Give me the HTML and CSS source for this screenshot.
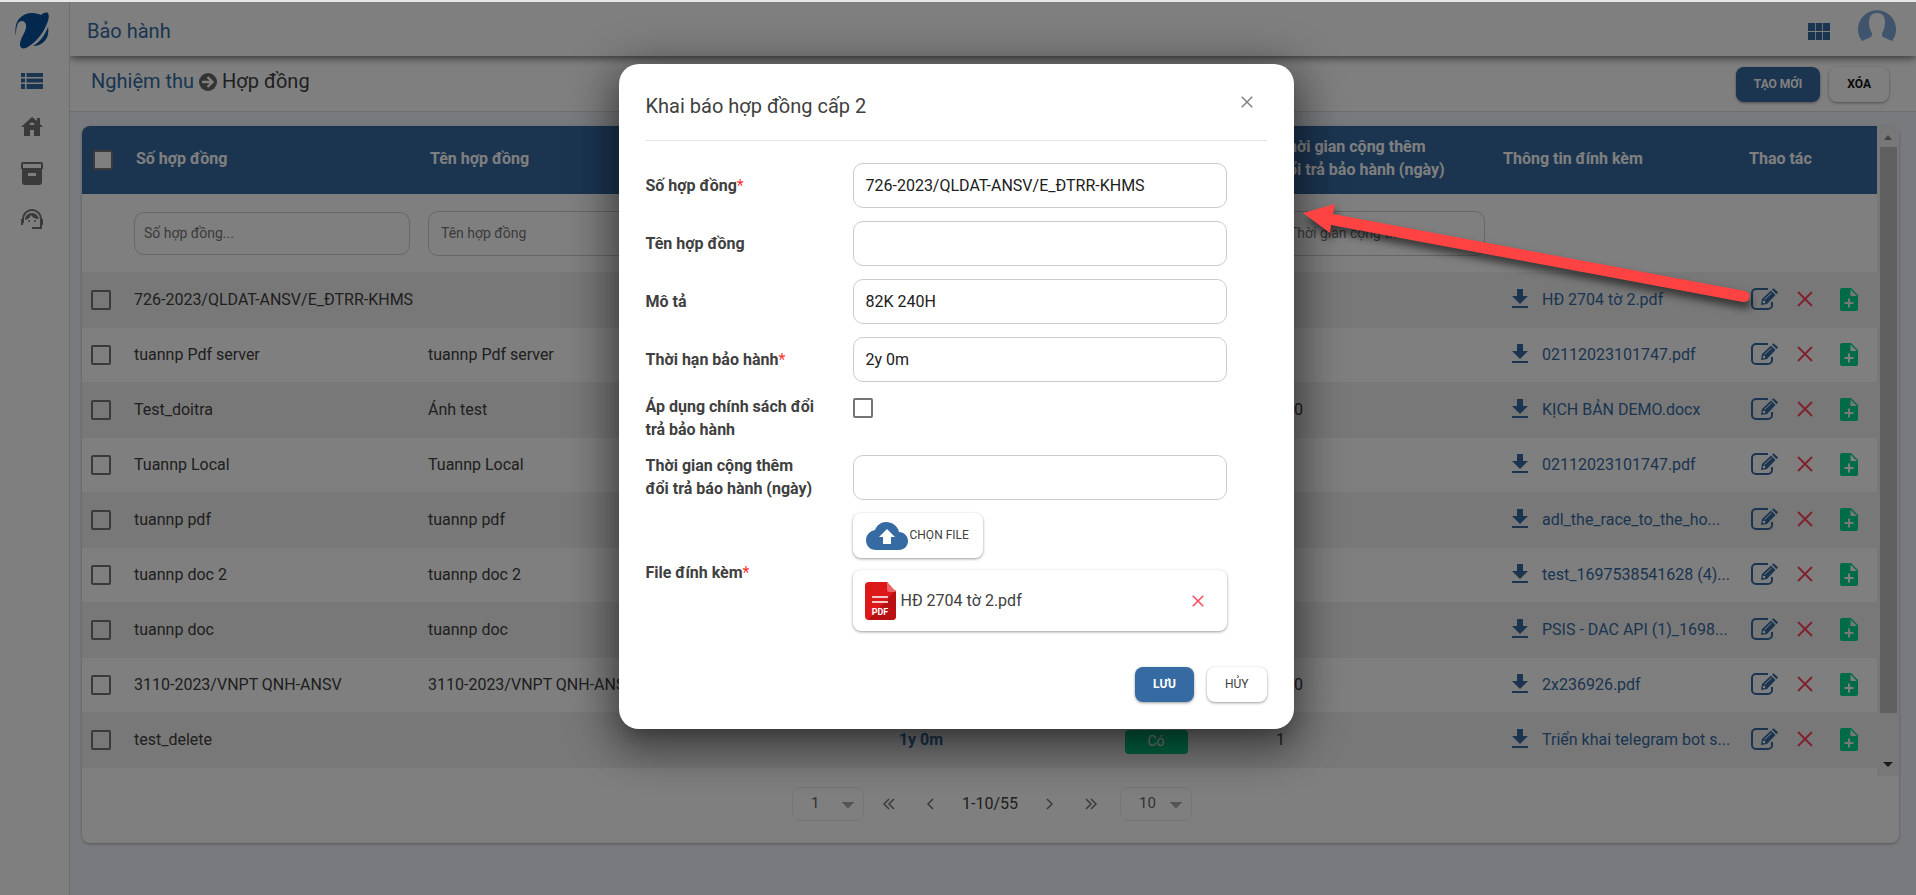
FILE: index.html
```html
<!DOCTYPE html>
<html lang="vi">
<head>
<meta charset="utf-8">
<meta name="viewport" content="width=device-width, initial-scale=1">
<title>Bảo hành</title>
<link rel="stylesheet" href="styles.css">
</head>
<body>
<svg class="sprite" aria-hidden="true">
  <symbol id="i-download" viewBox="0 0 16 20"><path d="M5 0h6v7h5l-8 8-8-8h5zM0 17h16v2H0z" fill="currentColor"/></symbol>
  <symbol id="i-edit" viewBox="0 0 28 22">
    <path d="M17 1H5a4 4 0 0 0-4 4v12a4 4 0 0 0 4 4h12a4 4 0 0 0 4-4v-3" fill="none" stroke="currentColor" stroke-width="2"/>
    <path d="M10 17l1-6L20 2.500l4.500 4.500L16 16z" fill="currentColor"/>
    <path d="M21 1.500l1.500-1.200 4.500 4-1.500 2z" fill="currentColor"/>
    <path d="M13.500 11.500l7-6.500" stroke="#fff" stroke-width="1"/><circle cx="13" cy="14" r="1.300" fill="#fff"/>
  </symbol>
  <symbol id="i-x" viewBox="0 0 16 16"><path d="M1 1l14 14M15 1L1 15" fill="none" stroke="currentColor" stroke-width="2"/></symbol>
  <symbol id="i-add" viewBox="0 0 18 23"><path fill-rule="evenodd" d="M2 0h9l7 7v14a2 2 0 0 1-2 2H2a2 2 0 0 1-2-2V2a2 2 0 0 1 2-2zM10.500 1.500V8H17zM8 10.500V14H4.500v2H8v3.500h2V16h3.500v-2H10v-3.500z" fill="currentColor"/></symbol>
</svg>
<div class="app">
  <aside class="sidebar">
    <a class="logo" href="#" aria-label="Trang chủ">
      <svg width="34" height="37" viewBox="0 0 34 37"><g fill="#06509a"><path d="M1 24C-2 10 6 1 17 1c4 0 7 1 9 2 2-2 5-3 7-2 2 3 0 9-3 15-4 8-11 16-19 20-3 1-6 0-6-3 0-8 7-13 6-20-1-6-8-5-9 1-1 3-1 6-1 10z"/><path d="M33 15c2 11-5 19-15 19 7-4 12-11 15-19z"/></g></svg>
    </a>
    <nav class="menu">
      <a class="active" href="#" aria-label="Danh sách"><svg width="22" height="18" viewBox="0 0 22 18"><path d="M0 1h4v4H0zM5.500 1H22v4H5.500zM0 6.500h4v4H0zM5.500 6.500H22v4H5.500zM0 12h4v5H0zM5.500 12H22v5H5.500z" fill="currentColor"/></svg></a>
      <a href="#" aria-label="Nhà"><svg width="22" height="20" viewBox="0 0 22 20"><path fill-rule="evenodd" d="M0 10L11 0l5 4V1h3v6l3 3h-3v9h-6v-6H9v6H3v-9zM8.500 8h5A2.500 2.500 0 0 0 8.500 8z" fill="currentColor"/></svg></a>
      <a href="#" aria-label="Lưu trữ"><svg width="22" height="23" viewBox="0 0 22 23"><path fill-rule="evenodd" d="M2 0h18a2 2 0 0 1 2 2v5h-1v13a3 3 0 0 1-3 3H4a3 3 0 0 1-3-3V7H0V2a2 2 0 0 1 2-2zM2 2v4h18V2zM7 11v3h8v-3z" fill="currentColor"/></svg></a>
      <a href="#" aria-label="Hỗ trợ"><svg width="22" height="21" viewBox="0 0 22 21"><path d="M2 14V10a9 9 0 0 1 18 0v9h-9" fill="none" stroke="currentColor" stroke-width="2"/><path d="M0 10h2v6H0zM20 10h2v6h-2z" fill="currentColor"/><path d="M4 11c0-4 3-7 7-7 3 0 6 2 7 6-3 0-6-1-8-4-1 3-3 4-6 5z" fill="currentColor"/><circle cx="8" cy="12" r="1" fill="currentColor"/><circle cx="14" cy="12" r="1" fill="currentColor"/></svg></a>
    </nav>
  </aside>
  <div class="main">
    <header class="topbar">
      <h1>Bảo hành</h1>
      <div class="topbar-tools">
        <button class="plain primary" aria-label="Ứng dụng"><svg width="22" height="17" viewBox="0 0 22 17"><path d="M0 0h7v8H0zM7.800 0h6.400v8H7.800zM15 0h7v8h-7zM0 9h7v8H0zM7.800 9h6.400v8H7.800zM15 9h7v8h-7z" fill="currentColor"/></svg></button>
        <button class="plain avatar" aria-label="Tài khoản"><svg width="38" height="31" viewBox="0 0 38 31"><path d="M4 31A19 19 0 1 1 34 31L25 27q-1-1-1-4 3-4 3-11 0-9-8-9t-8 9q0 7 3 11 0 3-1 4z" fill="#82a8da"/></svg></button>
      </div>
    </header>
    <div class="crumbs">
      <nav class="trail"><a href="#">Nghiệm thu</a>
        <svg width="18" height="18" viewBox="0 0 18 18"><circle cx="9" cy="9" r="9" fill="#666"/><path d="M3 9h10M8.500 4l5 5-5 5" fill="none" stroke="#fff" stroke-width="2.400"/></svg>
        <span>Hợp đồng</span></nav>
      <div class="crumb-actions"><button class="btn btn-primary">TẠO MỚI</button><button class="btn btn-strong">XÓA</button></div>
    </div>
    <main class="content">
      <section class="card">
        <div class="table-area">
          <table>
            <colgroup><col class="c-check"><col class="c-number"><col class="c-name"><col class="c-note"><col class="c-term"><col class="c-policy"><col class="c-extra"><col class="c-file"><col class="c-act"></colgroup>
            <thead>
              <tr><th><input type="checkbox" aria-label="Chọn tất cả"></th><th>Số hợp đồng</th><th>Tên hợp đồng</th><th></th><th></th><th></th><th>Thời gian cộng thêm<br>đổi trả bảo hành (ngày)</th><th>Thông tin đính kèm</th><th>Thao tác</th></tr>
            </thead>
            <tbody>
              <tr class="filter"><td></td><td><input class="field small" type="text" placeholder="Số hợp đồng..." aria-label="Số hợp đồng"></td><td><input class="field" type="text" placeholder="Tên hợp đồng" aria-label="Tên hợp đồng"></td><td></td><td></td><td></td><td><input class="field" type="text" placeholder="Thời gian cộng thêm" aria-label="Thời gian cộng thêm"></td><td></td><td></td></tr>
              <tr><td><input type="checkbox" aria-label="Chọn"></td><td>726-2023/QLDAT-ANSV/E_ĐTRR-KHMS</td><td></td><td></td><td></td><td></td><td></td><td><a class="file" href="#"><svg width="16" height="20"><use href="#i-download"/></svg><span>HĐ 2704 tờ 2.pdf</span></a></td><td><div class="acts"><button class="plain primary" aria-label="Sửa"><svg width="28" height="22"><use href="#i-edit"/></svg></button><button class="plain danger" aria-label="Xóa"><svg width="16" height="16"><use href="#i-x"/></svg></button><button class="plain success" aria-label="Thêm"><svg width="18" height="23"><use href="#i-add"/></svg></button></div></td></tr>
              <tr><td><input type="checkbox" aria-label="Chọn"></td><td>tuannp Pdf server</td><td>tuannp Pdf server</td><td></td><td></td><td></td><td></td><td><a class="file" href="#"><svg width="16" height="20"><use href="#i-download"/></svg><span>02112023101747.pdf</span></a></td><td><div class="acts"><button class="plain primary" aria-label="Sửa"><svg width="28" height="22"><use href="#i-edit"/></svg></button><button class="plain danger" aria-label="Xóa"><svg width="16" height="16"><use href="#i-x"/></svg></button><button class="plain success" aria-label="Thêm"><svg width="18" height="23"><use href="#i-add"/></svg></button></div></td></tr>
              <tr><td><input type="checkbox" aria-label="Chọn"></td><td>Test_doitra</td><td>Ánh test</td><td></td><td></td><td></td><td>100</td><td><a class="file" href="#"><svg width="16" height="20"><use href="#i-download"/></svg><span>KỊCH BẢN DEMO.docx</span></a></td><td><div class="acts"><button class="plain primary" aria-label="Sửa"><svg width="28" height="22"><use href="#i-edit"/></svg></button><button class="plain danger" aria-label="Xóa"><svg width="16" height="16"><use href="#i-x"/></svg></button><button class="plain success" aria-label="Thêm"><svg width="18" height="23"><use href="#i-add"/></svg></button></div></td></tr>
              <tr><td><input type="checkbox" aria-label="Chọn"></td><td>Tuannp Local</td><td>Tuannp Local</td><td></td><td></td><td></td><td></td><td><a class="file" href="#"><svg width="16" height="20"><use href="#i-download"/></svg><span>02112023101747.pdf</span></a></td><td><div class="acts"><button class="plain primary" aria-label="Sửa"><svg width="28" height="22"><use href="#i-edit"/></svg></button><button class="plain danger" aria-label="Xóa"><svg width="16" height="16"><use href="#i-x"/></svg></button><button class="plain success" aria-label="Thêm"><svg width="18" height="23"><use href="#i-add"/></svg></button></div></td></tr>
              <tr><td><input type="checkbox" aria-label="Chọn"></td><td>tuannp pdf</td><td>tuannp pdf</td><td></td><td></td><td></td><td></td><td><a class="file" href="#"><svg width="16" height="20"><use href="#i-download"/></svg><span>adl_the_race_to_the_ho...</span></a></td><td><div class="acts"><button class="plain primary" aria-label="Sửa"><svg width="28" height="22"><use href="#i-edit"/></svg></button><button class="plain danger" aria-label="Xóa"><svg width="16" height="16"><use href="#i-x"/></svg></button><button class="plain success" aria-label="Thêm"><svg width="18" height="23"><use href="#i-add"/></svg></button></div></td></tr>
              <tr><td><input type="checkbox" aria-label="Chọn"></td><td>tuannp doc 2</td><td>tuannp doc 2</td><td></td><td></td><td></td><td></td><td><a class="file" href="#"><svg width="16" height="20"><use href="#i-download"/></svg><span>test_1697538541628 (4)...</span></a></td><td><div class="acts"><button class="plain primary" aria-label="Sửa"><svg width="28" height="22"><use href="#i-edit"/></svg></button><button class="plain danger" aria-label="Xóa"><svg width="16" height="16"><use href="#i-x"/></svg></button><button class="plain success" aria-label="Thêm"><svg width="18" height="23"><use href="#i-add"/></svg></button></div></td></tr>
              <tr><td><input type="checkbox" aria-label="Chọn"></td><td>tuannp doc</td><td>tuannp doc</td><td></td><td></td><td></td><td></td><td><a class="file" href="#"><svg width="16" height="20"><use href="#i-download"/></svg><span>PSIS - DAC API (1)_1698...</span></a></td><td><div class="acts"><button class="plain primary" aria-label="Sửa"><svg width="28" height="22"><use href="#i-edit"/></svg></button><button class="plain danger" aria-label="Xóa"><svg width="16" height="16"><use href="#i-x"/></svg></button><button class="plain success" aria-label="Thêm"><svg width="18" height="23"><use href="#i-add"/></svg></button></div></td></tr>
              <tr><td><input type="checkbox" aria-label="Chọn"></td><td>3110-2023/VNPT QNH-ANSV</td><td>3110-2023/VNPT QNH-ANSV</td><td></td><td></td><td></td><td>100</td><td><a class="file" href="#"><svg width="16" height="20"><use href="#i-download"/></svg><span>2x236926.pdf</span></a></td><td><div class="acts"><button class="plain primary" aria-label="Sửa"><svg width="28" height="22"><use href="#i-edit"/></svg></button><button class="plain danger" aria-label="Xóa"><svg width="16" height="16"><use href="#i-x"/></svg></button><button class="plain success" aria-label="Thêm"><svg width="18" height="23"><use href="#i-add"/></svg></button></div></td></tr>
              <tr><td><input type="checkbox" aria-label="Chọn"></td><td>test_delete</td><td></td><td></td><td class="term">1y 0m</td><td class="center"><span class="badge">Có</span></td><td>1</td><td><a class="file" href="#"><svg width="16" height="20"><use href="#i-download"/></svg><span>Triển khai telegram bot s...</span></a></td><td><div class="acts"><button class="plain primary" aria-label="Sửa"><svg width="28" height="22"><use href="#i-edit"/></svg></button><button class="plain danger" aria-label="Xóa"><svg width="16" height="16"><use href="#i-x"/></svg></button><button class="plain success" aria-label="Thêm"><svg width="18" height="23"><use href="#i-add"/></svg></button></div></td></tr>
            </tbody>
          </table>
          <div class="scroll" aria-hidden="true"><i class="up"></i><i class="thumb"></i><i class="down"></i></div>
        </div>
        <footer class="pager">
          <select aria-label="Trang"><option>1</option></select>
          <button class="plain first" aria-label="Trang đầu"><svg width="12" height="12" viewBox="0 0 12 12"><path d="M6 1L1 6l5 5M11 1L6 6l5 5"/></svg></button>
          <button class="plain" aria-label="Trang trước"><svg width="12" height="12" viewBox="0 0 12 12"><path d="M8 1L3 6l5 5"/></svg></button>
          <span>1-10/55</span>
          <button class="plain" aria-label="Trang sau"><svg width="12" height="12" viewBox="0 0 12 12"><path d="M4 1l5 5-5 5"/></svg></button>
          <button class="plain last" aria-label="Trang cuối"><svg width="12" height="12" viewBox="0 0 12 12"><path d="M1 1l5 5-5 5M6 1l5 5-5 5"/></svg></button>
          <select aria-label="Số dòng"><option>10</option></select>
        </footer>
      </section>
    </main>
  </div>

  <div class="overlay">
    <form class="modal" role="dialog" aria-labelledby="dlg-title">
      <div class="modal-head"><h2 id="dlg-title">Khai báo hợp đồng cấp 2</h2><button type="button" class="plain close" aria-label="Đóng"><svg width="12" height="12" viewBox="0 0 16 16"><use href="#i-x"/></svg></button></div>
      <div class="grid">
        <label for="f1">Số hợp đồng<em>*</em></label><input id="f1" class="field" type="text" value="726-2023/QLDAT-ANSV/E_ĐTRR-KHMS">
        <label for="f2">Tên hợp đồng</label><input id="f2" class="field" type="text">
        <label for="f3">Mô tả</label><input id="f3" class="field" type="text" value="82K 240H">
        <label for="f4">Thời hạn bảo hành<em>*</em></label><input id="f4" class="field" type="text" value="2y 0m">
        <label for="f5">Áp dụng chính sách đổi trả bảo hành</label><input id="f5" class="top" type="checkbox">
        <label for="f6">Thời gian cộng thêm đổi trả báo hành (ngày)</label><input id="f6" class="field" type="text">
        <label for="f7">File đính kèm<em>*</em></label>
        <div class="files">
          <button id="f7" type="button" class="btn upload"><svg width="42" height="28" viewBox="0 0 42 28"><path d="M10 28C4 28 0 24 0 18c0-5 4-9 9-10C11 3 15 0 20 0c6 0 12 4 13 10 5 0 9 4 9 9s-4 9-9 9z" fill="#366aa2"/><path d="M21 7l8 8h-4v7h-8v-7h-4z" fill="#fff"/></svg>CHỌN FILE</button>
          <div class="file-card">
            <svg width="31" height="38" viewBox="0 0 31 38"><path d="M4 0h18l9 10v24a4 4 0 0 1-4 4H4a4 4 0 0 1-4-4V4a4 4 0 0 1 4-4z" fill="#dc1819"/><path d="M31 8v26a4 4 0 0 1-4 4H3z" fill="#b91013"/><path d="M22 0l9 10h-7a2 2 0 0 1-2-2z" fill="#eb6666"/><path d="M7 15h16M7 20h16" stroke="#fff" stroke-width="1.500"/><text class="pdf" x="15" y="33">PDF</text></svg>
            <span>HĐ 2704 tờ 2.pdf</span>
            <button type="button" class="plain danger" aria-label="Gỡ file"><svg width="12" height="12"><use href="#i-x"/></svg></button>
          </div>
        </div>
      </div>
      <div class="modal-foot"><button class="btn btn-primary">LƯU</button><button type="button" class="btn">HỦY</button></div>
    </form>
  </div>
  <svg class="pointer" viewBox="0 0 480 120" width="480" height="120" aria-hidden="true"><path d="M13 23L45 14l-2 10 412 77a5.500 5.500 0 0 1-2 11L41 35l-1 8z" fill="#ff4343"/></svg>
</div>
</body>
</html>
```
FILE: styles.css
```css
* { box-sizing: border-box; }
body { margin: 0; font: 16px/23px Roboto, sans-serif; color: #404040; }
button, input, select { font: inherit; color: inherit; }
h1, h2 { margin: 0; font-weight: 400; font-size: 20px; }
a { color: inherit; text-decoration: none; }
svg { display: block; flex: none; }
.sprite { position: absolute; width: 0; height: 0; }

.app { position: relative; display: flex; min-height: 100vh; border-top: 2px solid #e8e8e8; background: #fff; overflow: hidden; }
.sidebar { width: 70px; flex: none; border-right: 1px solid #dcdde0; padding: 10px 0; color: #747474; }
.logo { display: flex; justify-content: center; margin-left: -6px; }
.menu { display: flex; flex-direction: column; align-items: center; margin: 9px 6px 0 0; }
.menu a { display: flex; align-items: center; height: 46px; }
.active, .primary { color: #366aa2; }

.main { flex: 1; min-width: 0; display: flex; flex-direction: column; }
.topbar { position: relative; display: flex; justify-content: space-between; align-items: center; height: 54px; padding: 0 20px 0 17px; box-shadow: 0 2px 8px rgba(0,0,0,.6); clip-path: inset(0 0 -12px 0); color: #366aa2; }
.topbar h1 { padding-top: 4px; }
.topbar-tools { display: flex; align-items: center; gap: 28px; }
.plain { display: inline-flex; border: 0; background: none; padding: 0; cursor: pointer; }
.topbar .primary { padding-top: 4px; }
.topbar .avatar { padding-bottom: 8px; }
.crumbs { display: flex; justify-content: space-between; align-items: center; height: 56px; padding: 2px 27px 0 21px; border-bottom: 1px solid #dcdde0; }
.trail { display: flex; align-items: center; gap: 5px; font-size: 20px; padding-bottom: 6px; }
.trail a { color: #366aa2; }
.crumb-actions { display: flex; gap: 9px; }
.btn { height: 35px; padding: 0 18px; border: 0; border-radius: 8px; background: #fff; font-size: 12px; box-shadow: 0 1px 3px rgba(0,0,0,.4); cursor: pointer; }
.btn-strong { color: #111; font-weight: 700; }
.btn-primary { background: #366aa2; color: #fff; font-weight: 700; }

.content { flex: 1; background: #f3f5fb; padding: 14px 17px 52px 12px; }
.card { background: #fff; border-radius: 8px; overflow: hidden; box-shadow: 0 1px 3px rgba(0,0,0,.3); }
.table-area { display: flex; height: 650px; }
table { flex: 1; width: 100%; min-width: 0; border-collapse: collapse; table-layout: fixed; align-self: flex-start; }
.c-check { width: 44px; } .c-number, .c-name { width: 294px; } .c-note { width: 84px; } .c-term { width: 246px; }
.c-policy { width: 224px; } .c-extra { width: 225px; } .c-file { width: 246px; } .c-act { width: 138px; }
th { height: 68px; padding: 0 0 4px 10px; background: #366aa2; color: #fff; text-align: left; font-weight: 700; white-space: nowrap; }
td { height: 54px; padding: 0 8px 2px; white-space: nowrap; }
.filter td { height: 78px; padding: 0 8px; }
tbody tr:nth-child(even) td { height: 56px; background: #f0f0f0; }
td:first-child { padding: 0 0 0 9px; }
th:first-child { padding: 0 0 0 11px; }
input[type=checkbox] { appearance: none; display: block; width: 20px; height: 20px; margin: 0; border: 2px solid #747474; border-radius: 2px; background: #fff; }
tbody input[type=checkbox] { background: transparent; }
td.term { text-align: center; font-weight: 700; color: #366aa2; }
td.center { text-align: center; padding: 3px 8px 0; }
.badge { display: inline-block; width: 63px; height: 24px; border-radius: 4px; background: #00c682; color: #fff; font-size: 14px; vertical-align: middle; }
.file { display: flex; align-items: center; gap: 14px; padding: 0 0 0 11px; color: #366aa2; }
.acts { display: flex; align-items: center; padding-left: 4px; }
.acts .danger { margin: 0 27px 0 18px; }
.danger { color: #ff4560; }
.success { color: #00d68f; }
.field { display: block; width: 100%; height: 45px; padding: 0 12px; border: 1px solid #ccc; border-radius: 10px; background: #fff; outline: 0; }
.filter .field { padding: 0 12px; font-size: 14px; color: #777; }
.filter .small { width: 276px; max-width: 100%; height: 43px; padding: 0 9px; }
.filter .field::placeholder { color: #777; opacity: 1; }
.scroll { width: 22px; flex: none; display: flex; flex-direction: column; align-items: center; background: #f1f1f1; }
.up { border: 4px solid transparent; border-bottom: 5px solid #888; margin: 5px 0 7px; }
.thumb { width: 17px; height: 566px; background: #c1c1c1; }
.down { border: 5px solid transparent; border-top: 5px solid #333; margin-top: 49px; }
.pager { display: flex; align-items: center; justify-content: center; gap: 30px; height: 67px; padding: 0 0 12px 3px; }
.pager svg { fill: none; stroke: #747474; stroke-width: 1.5; }
.pager span { margin: 0 -5px; }
.pager .first { margin-left: -11px; }
.pager .last { margin-right: -7px; }
.pager select { appearance: none; width: 72px; height: 34px; padding: 0 0 0 18px; border: 1px solid #ececec; border-radius: 8px; font-size: 15px; color: #666; background: linear-gradient(to bottom left, #aaa 50%, transparent 51%) 49px 14px / 6px 6px no-repeat, linear-gradient(to bottom right, #aaa 50%, transparent 51%) 55px 14px / 6px 6px no-repeat, #fff; }

.overlay { position: absolute; inset: 0; display: flex; justify-content: center; align-items: flex-start; padding-top: 62px; padding-right: 4px; background: rgba(0,0,0,.5); }
.modal { width: 675px; max-width: 100%; padding: 0 27px 27px; border-radius: 20px; background: #fff; box-shadow: 0 11px 15px -7px rgba(0,0,0,.2), 0 24px 38px 3px rgba(0,0,0,.14), 0 9px 46px 8px rgba(0,0,0,.4); }
.modal-head { display: flex; justify-content: space-between; align-items: center; height: 77px; padding: 8px 14px 0 0; border-bottom: 1px solid #e6e6e6; }
.close { color: #808080; padding-bottom: 8px; }
.grid { display: grid; grid-template-columns: 207px 374px; row-gap: 13px; align-items: center; padding-top: 22px; }
.grid label { max-width: 172px; font-weight: 700; }
.grid em { font-style: normal; font-weight: 400; color: #ff3333; }
.modal .field { color: #202020; }
.grid .top { align-self: start; margin-top: 3px; }
.files { display: flex; flex-direction: column; align-items: flex-start; gap: 12px; }
.upload { display: flex; align-items: center; gap: 2px; height: 45px; padding: 0 14px 0 13px; }
.file-card { display: flex; align-items: center; gap: 5px; align-self: stretch; height: 61px; padding: 0 23px 0 12px; border-radius: 8px; box-shadow: 0 1px 3px rgba(0,0,0,.4); }
.file-card button { margin-left: auto; }
.pdf { font: 700 9px Roboto, sans-serif; fill: #fff; text-anchor: middle; }
.modal-foot { display: flex; justify-content: flex-end; gap: 13px; padding-top: 36px; }
.pointer { position: absolute; left: 1290px; top: 188px; filter: drop-shadow(2px 6px 4px rgba(0,0,0,.6)); pointer-events: none; }
```
